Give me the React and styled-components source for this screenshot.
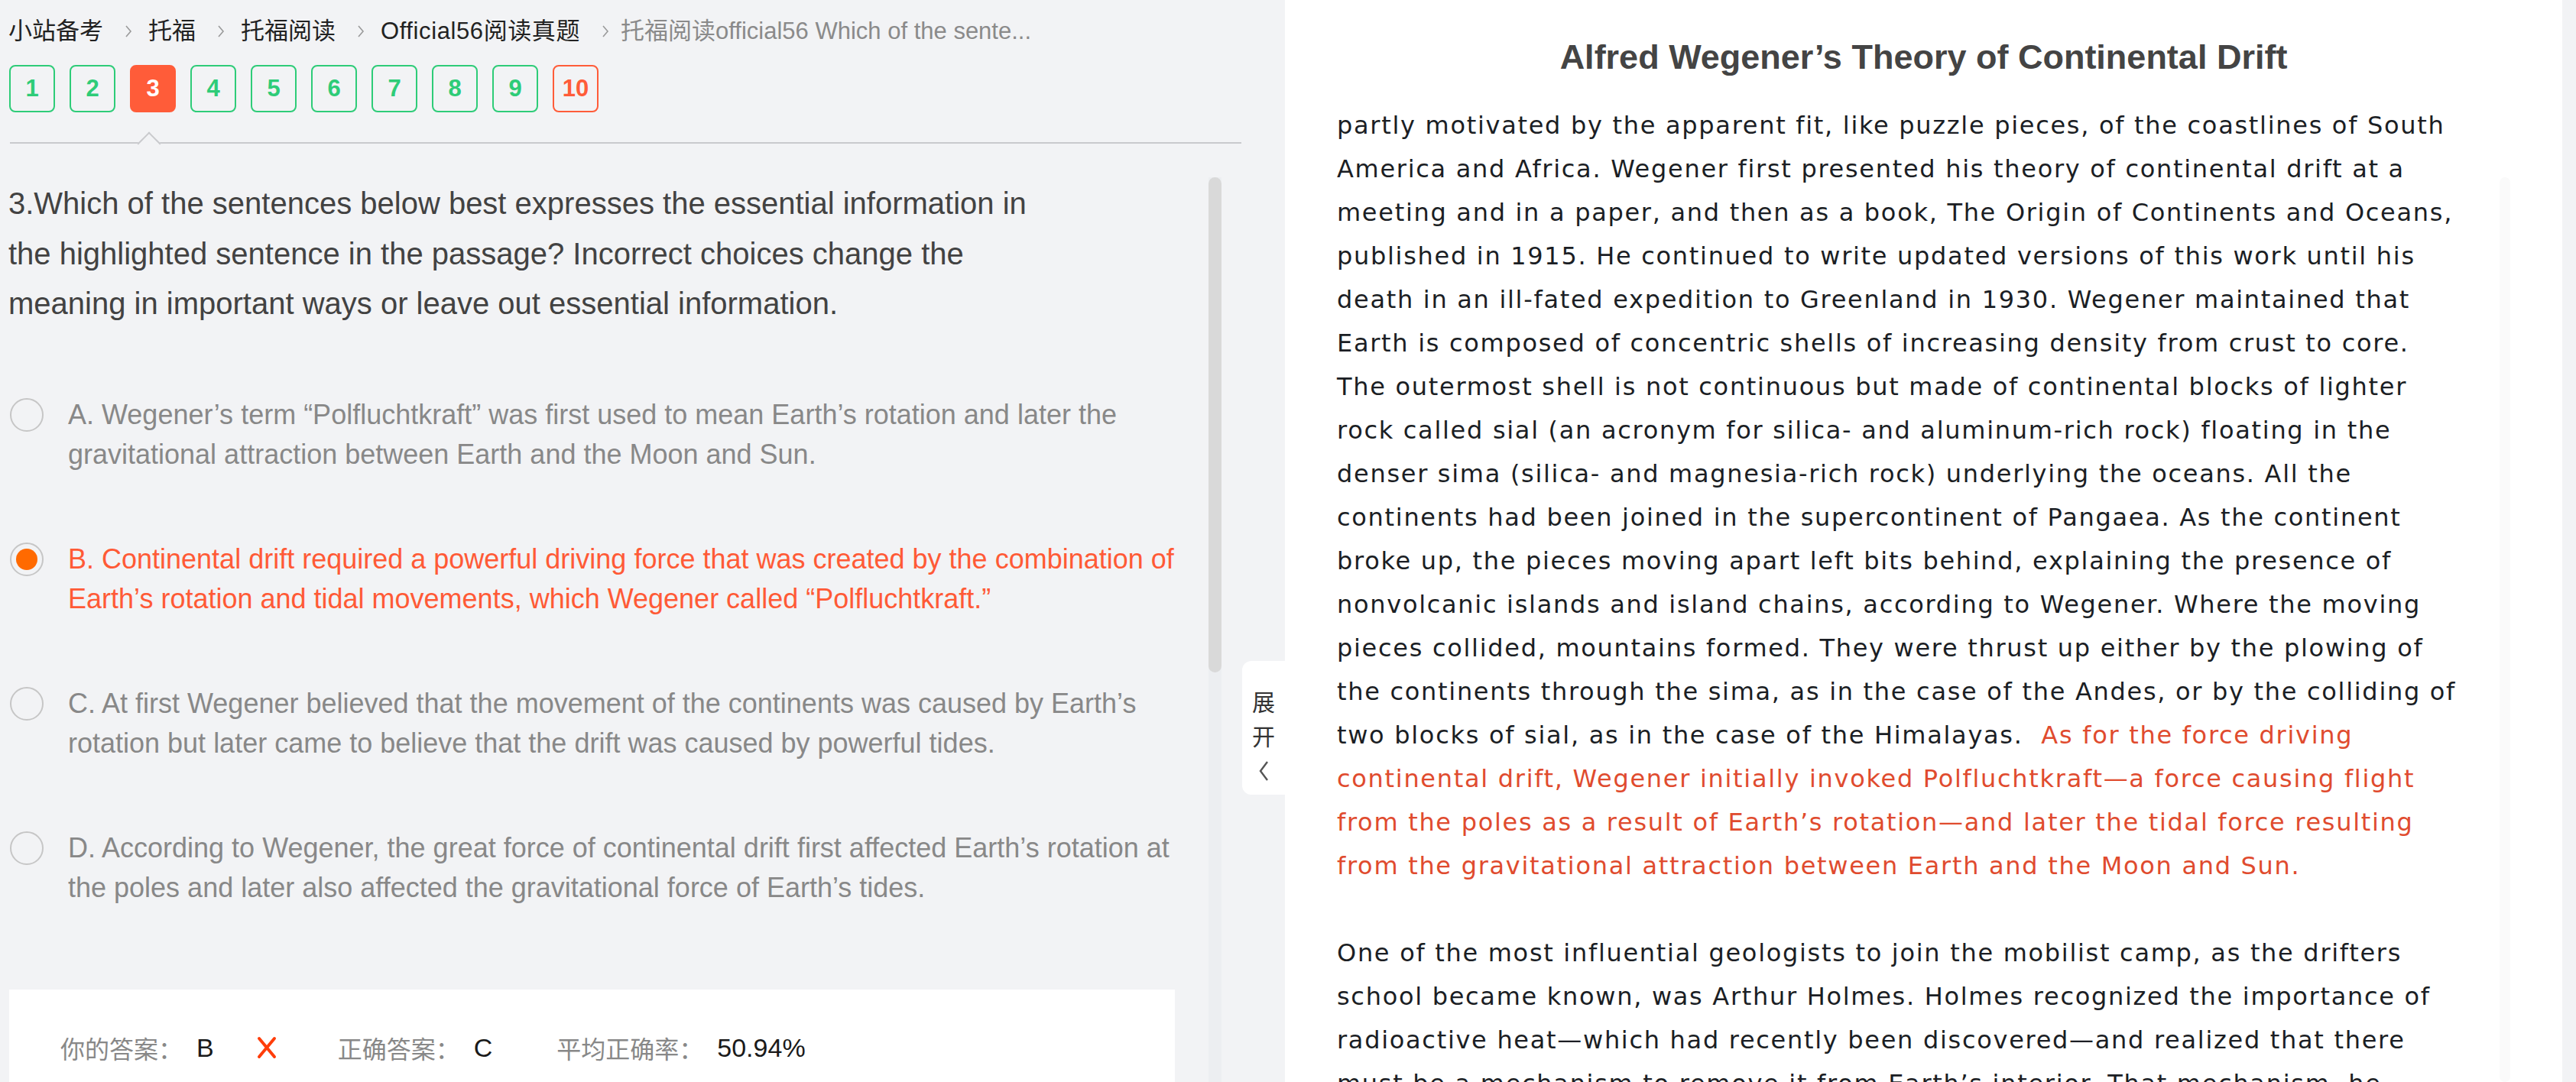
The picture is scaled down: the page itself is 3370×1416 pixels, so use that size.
import React from 'react'
import styled, { createGlobalStyle } from 'styled-components'

const GlobalStyle = createGlobalStyle`
    body {
        margin: 0;
        background: #f2f3f5;
        font-family: "Liberation Sans", "Noto Sans CJK SC", sans-serif;
    }
`;

const Page = styled.div`
    display: flex;
    height: 1416px;
    overflow: hidden;
    background: #f2f3f5;
`;

const LeftPane = styled.div`
    width: 1625px;
    flex-shrink: 0;
    display: flex;
    flex-direction: column;
`;

const Breadcrumb = styled.div`
    height: 62px;
    padding: 20px 0 0 11px;
    box-sizing: border-box;
    display: flex;
    align-items: center;
    font-size: 31px;
    line-height: 42px;
    color: #222;
    white-space: nowrap;
`;

const Crumb = styled.span`
    color: ${props => props.$current ? '#8a8a8a' : '#222'};
    margin-left: ${props => props.$current ? '-6px' : '0'};
    letter-spacing: ${props => props.$wide ? '0.6px' : '0'};
`;

const Sep = styled.svg`
    width: 10px;
    height: 18px;
    margin: 0 21px 0 28px;
    flex-shrink: 0;
`;

const QuestionNav = styled.div`
    display: flex;
    gap: 19px;
    padding-left: 12px;
    margin-top: 23px;
`;

const NumBtn = styled.div`
    width: 60px;
    height: 62px;
    box-sizing: border-box;
    border-radius: 8px;
    border: 2px solid ${props => props.$state === 'ok' ? '#2ecc78' : '#ff5c39'};
    background: ${props => props.$state === 'active' ? '#ff5c39' : 'transparent'};
    color: ${props => props.$state === 'ok' ? '#2ecc78' : props.$state === 'active' ? '#fff' : '#ff5c39'};
    display: flex;
    align-items: center;
    justify-content: center;
    font-weight: bold;
    font-size: 31px;
`;

const Divider = styled.div`
    position: relative;
    margin: 39px 1px 0 13px;
    border-top: 2px solid #c9cacd;

    &::before {
        content: '';
        position: absolute;
        left: 171px;
        top: -11px;
        width: 20px;
        height: 20px;
        background: #f2f3f5;
        border-left: 2px solid #c9cacd;
        border-top: 2px solid #c9cacd;
        transform: rotate(45deg);
    }
`;

const BodyRow = styled.div`
    display: flex;
    flex: 1;
    min-height: 0;
`;

const Content = styled.div`
    width: 1581px;
    flex-shrink: 0;
    box-sizing: border-box;
    padding: 0 44px 0 11px;
`;

const Question = styled.div`
    margin-top: 46px;
    max-width: 1370px;
    font-size: 40px;
    line-height: 65.5px;
    color: #424242;
`;

const OptionList = styled.div`
    margin-top: 86px;
    display: flex;
    flex-direction: column;
    gap: 85px;
`;

const Option = styled.div`
    display: flex;
    align-items: flex-start;
`;

const Radio = styled.div`
    width: 44px;
    height: 44px;
    box-sizing: border-box;
    margin: 4px 0 0 2px;
    border-radius: 50%;
    border: 2px solid #c6c6c6;
    flex-shrink: 0;
    display: flex;
    align-items: center;
    justify-content: center;

    &::after {
        content: '';
        display: ${props => props.$checked ? 'block' : 'none'};
        width: 28px;
        height: 28px;
        border-radius: 50%;
        background: #ff6a00;
    }
`;

const OptionText = styled.div`
    margin-left: 32px;
    font-size: 36px;
    line-height: 52px;
    color: ${props => props.$selected ? '#ff5a36' : '#888'};
`;

const AnswerCard = styled.div`
    margin: 107px 0 0 1px;
    background: #fff;
    padding: 54px 0 200px 67px;
    display: flex;
    align-items: center;
    font-size: 34px;
    line-height: 44px;
`;

const Label = styled.span`
    color: #888;
    font-size: 32px;
    font-family: "Noto Sans CJK SC", sans-serif;
`;

const Value = styled.span`
    color: #1a1a1a;
    margin: 0 ${props => props.$gap || 0}px 0 18px;
`;

const WrongMark = styled.svg`
    width: 28px;
    height: 30px;
    margin: 0 79px 0 0;
`;

const ScrollTrack = styled.div`
    width: 17px;
    margin-top: 44px;
    background: #eceef1;
`;

const ScrollThumb = styled.div`
    height: 648px;
    border-radius: 9px;
    background: #d9d9d9;
`;

const ExpandCol = styled.div`
    width: 56px;
    flex-shrink: 0;
`;

const ExpandTab = styled.div`
    margin-top: 865px;
    height: 175px;
    box-sizing: border-box;
    padding-top: 30px;
    background: #fff;
    border-radius: 12px 0 0 12px;
    display: flex;
    flex-direction: column;
    align-items: center;
    font-family: "Noto Sans CJK SC", sans-serif;
    font-size: 30px;
    line-height: 45px;
    color: #333;

    svg {
        margin-top: 10px;
    }
`;

const RightPane = styled.div`
    width: 1671px;
    flex-shrink: 0;
    background: #fff;
    display: flex;
    flex-direction: column;
`;

const Title = styled.h1`
    margin: 0;
    padding-top: 48px;
    text-align: center;
    font-size: 45px;
    line-height: 54px;
    font-weight: bold;
    color: #444;
`;

const PassageRow = styled.div`
    display: flex;
    flex: 1;
    min-height: 0;
    margin-top: 34px;
    padding-left: 68px;
`;

const Passage = styled.div`
    width: 1479px;
    flex-shrink: 0;
    font-family: "DejaVu Sans", sans-serif;
    font-size: 32px;
    line-height: 57px;
    letter-spacing: 1.7px;
    color: #1b1e24;

    p {
        margin: 0 0 57px;
    }
`;

const Highlight = styled.span`
    color: #e04b2e;
`;

const PassageTrack = styled.div`
    width: 14px;
    margin: 96px 0 0 42px;
    border-radius: 7px;
    background: #fafafa;
`;

const crumbs = ['小站备考', '托福', '托福阅读', 'Official56阅读真题'];

const numbers = [
    { n: 1, state: 'ok' }, { n: 2, state: 'ok' }, { n: 3, state: 'active' },
    { n: 4, state: 'ok' }, { n: 5, state: 'ok' }, { n: 6, state: 'ok' },
    { n: 7, state: 'ok' }, { n: 8, state: 'ok' }, { n: 9, state: 'ok' },
    { n: 10, state: 'wrong' },
];

const options = [
    'A. Wegener’s term “Polfluchtkraft” was first used to mean Earth’s rotation and later the gravitational attraction between Earth and the Moon and Sun.',
    'B. Continental drift required a powerful driving force that was created by the combination of Earth’s rotation and tidal movements, which Wegener called “Polfluchtkraft.”',
    'C. At first Wegener believed that the movement of the continents was caused by Earth’s rotation but later came to believe that the drift was caused by powerful tides.',
    'D. According to Wegener, the great force of continental drift first affected Earth’s rotation at the poles and later also affected the gravitational force of Earth’s tides.',
];

const Chevron = () => (
    <Sep viewBox="0 0 10 18">
        <path d="M2 2 L8 9 L2 16" fill="none" stroke="#9a9a9a" strokeWidth="1.6" />
    </Sep>
);

export default function App() {
    return (
        <>
            <GlobalStyle />
            <Page>
                <LeftPane>
                    <Breadcrumb>
                        {crumbs.map(c => (
                            <React.Fragment key={c}>
                                <Crumb $wide={c.startsWith('Official')}>{c}</Crumb>
                                <Chevron />
                            </React.Fragment>
                        ))}
                        <Crumb $current>托福阅读official56 Which of the sente...</Crumb>
                    </Breadcrumb>

                    <QuestionNav>
                        {numbers.map(b => (
                            <NumBtn key={b.n} $state={b.state}>{b.n}</NumBtn>
                        ))}
                    </QuestionNav>

                    <Divider />

                    <BodyRow>
                        <Content>
                            <Question>
                                3.Which of the sentences below best expresses the essential information in the highlighted sentence in the passage? Incorrect choices change the meaning in important ways or leave out essential information.
                            </Question>

                            <OptionList>
                                {options.map((o, i) => (
                                    <Option key={i}>
                                        <Radio $checked={i === 1} />
                                        <OptionText $selected={i === 1}>{o}</OptionText>
                                    </Option>
                                ))}
                            </OptionList>

                            <AnswerCard>
                                <Label>你的答案：</Label>
                                <Value $gap={55}>B</Value>
                                <WrongMark viewBox="0 0 28 30">
                                    <path d="M4 3 L24 27 M24 3 L4 27" stroke="#ff3d0a" strokeWidth="4" strokeLinecap="round" />
                                </WrongMark>
                                <Label>正确答案：</Label>
                                <Value $gap={84}>C</Value>
                                <Label>平均正确率：</Label>
                                <Value>50.94%</Value>
                            </AnswerCard>
                        </Content>

                        <ScrollTrack>
                            <ScrollThumb />
                        </ScrollTrack>
                    </BodyRow>
                </LeftPane>

                <ExpandCol>
                    <ExpandTab>
                        <span>展</span>
                        <span>开</span>
                        <svg width="14" height="28" viewBox="0 0 14 28">
                            <path d="M12 2 L3 14 L12 26" fill="none" stroke="#555" strokeWidth="2.4" />
                        </svg>
                    </ExpandTab>
                </ExpandCol>

                <RightPane>
                    <Title>Alfred Wegener’s Theory of Continental Drift</Title>
                    <PassageRow>
                        <Passage>
                            <p>
                                partly motivated by the apparent fit, like puzzle pieces, of the coastlines of South America and Africa. Wegener first presented his theory of continental drift at a meeting and in a paper, and then as a book, The Origin of Continents and Oceans, published in 1915. He continued to write updated versions of this work until his death in an ill-fated expedition to Greenland in 1930. Wegener maintained that Earth is composed of concentric shells of increasing density from crust to core. The outermost shell is not continuous but made of continental blocks of lighter rock called sial (an acronym for silica- and aluminum-rich rock) floating in the denser sima (silica- and magnesia-rich rock) underlying the oceans. All the continents had been joined in the supercontinent of Pangaea. As the continent broke up, the pieces moving apart left bits behind, explaining the presence of nonvolcanic islands and island chains, according to Wegener. Where the moving pieces collided, mountains formed. They were thrust up either by the plowing of the continents through the sima, as in the case of the Andes, or by the colliding of two blocks of sial, as in the case of the Himalayas.{'\u00a0 '}
                                <Highlight>
                                    As for the force driving continental drift, Wegener initially invoked Polfluchtkraft—a force causing flight from the poles as a result of Earth’s rotation—and later the tidal force resulting from the gravitational attraction between Earth and the Moon and Sun.
                                </Highlight>
                            </p>
                            <p>
                                One of the most influential geologists to join the mobilist camp, as the drifters school became known, was Arthur Holmes. Holmes recognized the importance of radioactive heat—which had recently been discovered—and realized that there must be a mechanism to remove it from Earth’s interior. That mechanism, he suggested, was convection in the mantle.
                            </p>
                        </Passage>
                        <PassageTrack />
                    </PassageRow>
                </RightPane>
            </Page>
        </>
    )
}
